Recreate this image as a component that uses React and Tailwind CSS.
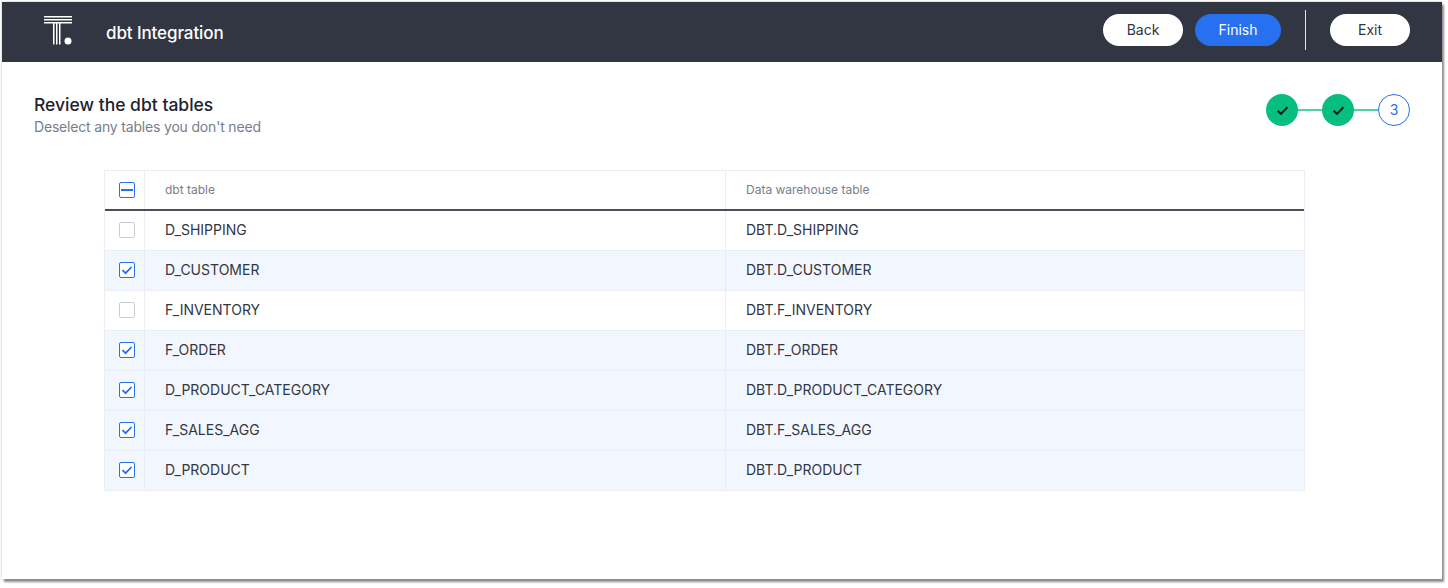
import React from "react";

const rows = [
  { name: "D_SHIPPING", checked: false },
  { name: "D_CUSTOMER", checked: true },
  { name: "F_INVENTORY", checked: false },
  { name: "F_ORDER", checked: true },
  { name: "D_PRODUCT_CATEGORY", checked: true },
  { name: "F_SALES_AGG", checked: true },
  { name: "D_PRODUCT", checked: true },
];

const Logo = () => (
  <svg width="30" height="30" viewBox="0 0 30 30" className="ml-[41px] mb-1">
    <g fill="#ffffff">
      <rect x="1" y="1" width="28" height="1.5" />
      <rect x="1" y="4" width="28" height="1.5" />
      <rect x="1" y="7" width="28" height="1.5" />
      <rect x="10" y="7" width="1.5" height="22.5" />
      <rect x="13" y="7" width="1.5" height="22.5" />
      <rect x="16" y="7" width="1.5" height="22.5" />
      <circle cx="25" cy="26" r="3.5" />
    </g>
  </svg>
);

const Check = ({ color = "#2770ef", size = 12, weight = 1.8 }) => (
  <svg width={size} height={size} viewBox="0 0 12 12" fill="none">
    <path d="M1.5 6.2 L4.6 9.2 L10.5 3" stroke={color} strokeWidth={weight} />
  </svg>
);

const Checkbox = ({ state }) => {
  if (state === "none") {
    return <div className="w-4 h-4 rounded-[2px] border border-[#c9ced6] bg-white" />;
  }
  return (
    <div className="w-4 h-4 rounded-[2px] border border-[#2770ef] bg-white flex items-center justify-center">
      {state === "mixed" ? <div className="w-3 h-[2px] bg-[#2770ef]" /> : <Check />}
    </div>
  );
};

const Step = () => (
  <div className="w-8 h-8 rounded-full bg-[#06bf7f] flex items-center justify-center">
    <Check color="#111827" size={13} />
  </div>
);

const App = () => {
  return (
    <div className="w-[1448px] h-[588px] bg-white pl-[2px] pt-[2px] font-['Inter',sans-serif] overflow-hidden">
      <div className="w-[1440px] h-[577px] bg-white shadow-[2px_3px_2px_#8c8c8c,0_0_2px_#b0b0b0]">
        <header className="h-[60px] bg-[#323642] flex items-center">
          <Logo />
          <h1 className="ml-[33px] pt-[3px] text-[17px] tracking-[-0.1px] font-medium text-white">dbt Integration</h1>
          <div className="ml-auto flex items-center pr-[32px] pb-1">
            <button className="w-20 h-8 rounded-full bg-white text-sm text-[#323642]">Back</button>
            <button className="w-[86px] h-8 ml-3 rounded-full bg-[#2770ef] text-sm text-white">Finish</button>
            <div className="w-px h-10 bg-[#e3e5e9] ml-6 mr-6" />
            <button className="w-20 h-8 rounded-full bg-white text-sm text-[#323642]">Exit</button>
          </div>
        </header>

        <div className="flex justify-between pl-[32px] pr-[32px] pt-[32px]">
          <div>
            <h2 className="text-[17.5px] leading-[22px] font-medium text-[#1d232f]">Review the dbt tables</h2>
            <p className="text-sm leading-[22px] tracking-[-0.18px] text-[#777e8b]">Deselect any tables you don't need</p>
          </div>
          <div className="flex items-center h-8">
            <Step />
            <div className="w-6 h-[2px] bg-[#4fd3a5]" />
            <Step />
            <div className="w-6 h-[2px] bg-[#4fd3a5]" />
            <div className="w-8 h-8 rounded-full border border-[#2770ef] text-sm text-[#2770ef] flex items-center justify-center">3</div>
          </div>
        </div>

        <div className="w-[1201px] ml-[102px] mt-[32px] border border-b-0 border-[#eaedf2]">
          <div className="flex h-[40px] border-b-2 border-[#4a4f5c] text-xs text-[#777e8b]">
            <div className="w-[40px] border-r border-[#eaedf2] flex items-center pl-[14px]">
              <Checkbox state="mixed" />
            </div>
            <div className="w-[581px] border-r border-[#eaedf2] flex items-center pl-5">dbt table</div>
            <div className="flex-1 flex items-center pl-5">Data warehouse table</div>
          </div>
          {rows.map((row) => (
            <div
              key={row.name}
              className={`flex h-10 border-b border-[#eaedf2] text-sm text-[#323642] ${row.checked ? "bg-[#f2f6fe]" : "bg-white"}`}
            >
              <div className="w-[40px] border-r border-[#eaedf2] flex items-center pl-[14px] pb-px">
                <Checkbox state={row.checked ? "checked" : "none"} />
              </div>
              <div className="w-[581px] border-r border-[#eaedf2] flex items-center pl-5 pb-px">{row.name}</div>
              <div className="flex-1 flex items-center pl-5 pb-px">DBT.{row.name}</div>
            </div>
          ))}
        </div>
      </div>
    </div>
  );
};

export default App;
